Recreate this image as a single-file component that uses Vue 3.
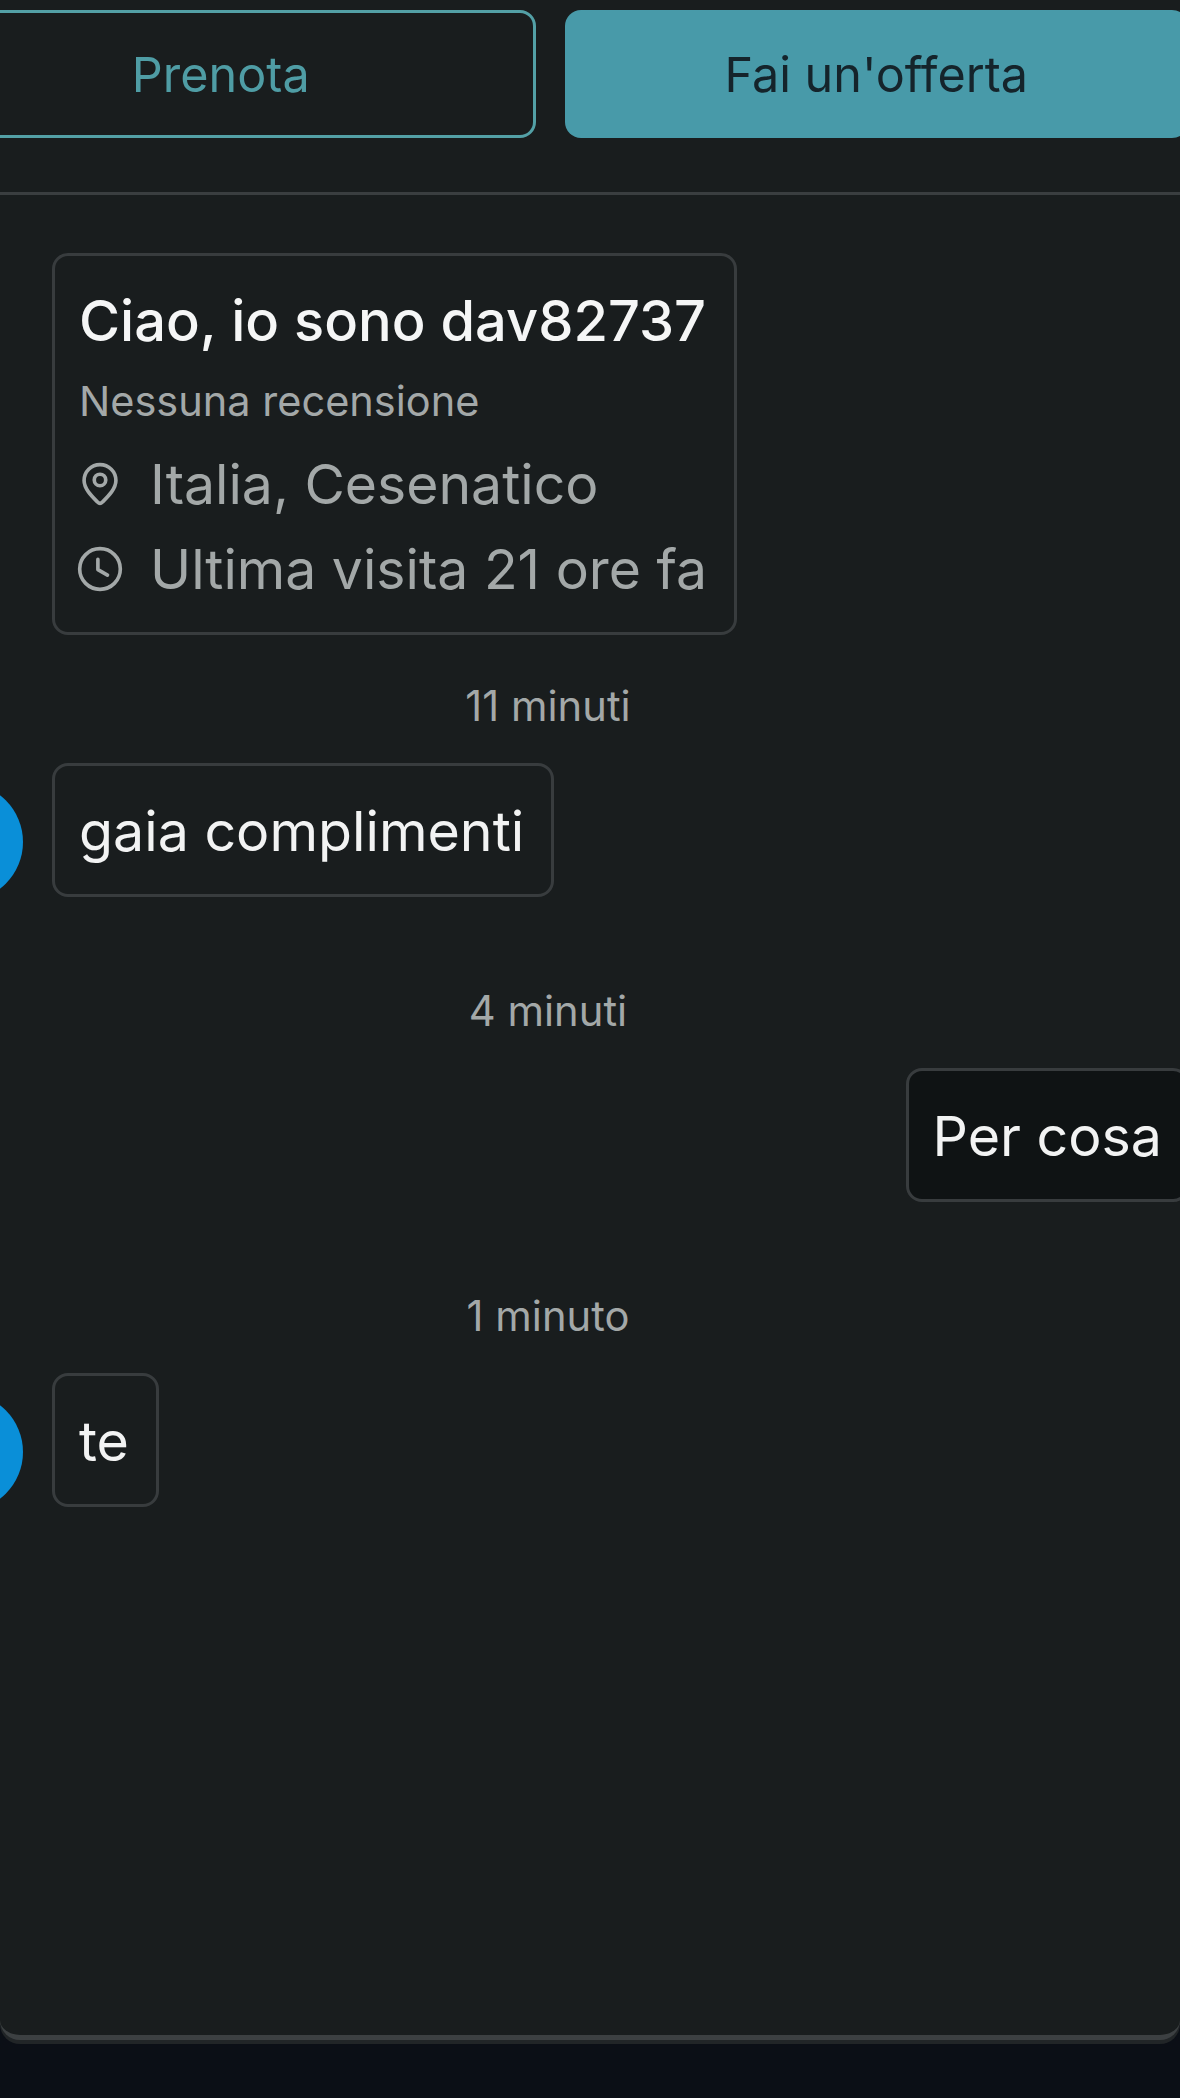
<template>
  <div class="page">
    <div class="panel">
      <div class="actions">
        <button class="btn outline">Prenota</button>
        <button class="btn filled">Fai un'offerta</button>
      </div>

      <div class="chat">
        <div class="intro">
          <div class="intro-title">Ciao, io sono dav82737</div>
          <div class="intro-sub">Nessuna recensione</div>
          <div class="intro-row">
            <svg class="icon" viewBox="0 0 24 24" fill="none" stroke="currentColor" stroke-width="1.9" stroke-linejoin="round">
              <path d="M12 22.1c-.5 0-.9-.3-1.3-.7C7.6 18.3 3.7 14.5 3.7 10.2 3.7 5.6 7.4 1.9 12 1.9s8.3 3.7 8.3 8.3c0 4.3-3.9 8.1-7 11.2-.4.4-.8.7-1.3.7z" />
              <circle cx="12" cy="9.9" r="3" />
            </svg>
            <span>Italia, Cesenatico</span>
          </div>
          <div class="intro-row">
            <svg class="icon" viewBox="0 0 24 24" fill="none" stroke="currentColor" stroke-width="1.9" stroke-linecap="round" stroke-linejoin="round">
              <circle cx="12" cy="12" r="10.6" />
              <path d="M10.9 7v5.3l5 2.9" />
            </svg>
            <span>Ultima visita 21 ore fa</span>
          </div>
        </div>

        <template v-for="msg in messages" :key="msg.time">
          <div class="time">{{ msg.time }}</div>
          <div class="row" :class="{ mine: msg.mine }">
            <div v-if="!msg.mine" class="avatar"></div>
            <div class="bubble">{{ msg.text }}</div>
          </div>
        </template>
      </div>
    </div>
  </div>
</template>

<script setup>
const messages = [
  { time: '11 minuti', text: 'gaia complimenti', mine: false },
  { time: '4 minuti', text: 'Per cosa', mine: true },
  { time: '1 minuto', text: 'te', mine: false }
]
</script>

<style>
html, body {
  margin: 0;
  background: #0b0f16;
  overflow: hidden;
}
</style>

<style scoped>
.page {
  width: 1180px;
  height: 2098px;
  overflow: hidden;
  background: #0b0f16;
  font-family: Inter, "Liberation Sans", sans-serif;
}

.panel {
  box-sizing: border-box;
  height: 2040px;
  background: #191d1e;
  border-bottom: 5px solid #3c4042;
  border-radius: 0 0 20px 20px;
  box-shadow: 0 4px 0 #212527;
}

.actions {
  display: flex;
  gap: 29px;
  width: 1282px;
  margin-left: -94px;
  padding: 10px 0 54px;
  border-bottom: 3px solid #3a3e40;
}

.btn {
  flex: 1;
  height: 128px;
  border-radius: 16px;
  font-family: inherit;
  font-size: 48.5px;
  font-weight: 400;
}

.outline {
  background: transparent;
  border: 3px solid #53a0a6;
  color: #4f9da5;
}

.filled {
  background: #489aa9;
  border: none;
  color: #15242b;
}

.chat {
  width: 1282px;
  margin-left: -93px;
}

.intro {
  box-sizing: border-box;
  width: 685px;
  height: 382px;
  margin: 58px 0 0 145px;
  padding: 35px 24px 0;
  background: #191d1e;
  border: 3px solid #383c3e;
  border-radius: 16px;
}

.intro-title {
  font-size: 56px;
  font-weight: 500;
  line-height: 60px;
  color: #f5f6f6;
  white-space: nowrap;
}

.intro-sub {
  margin: 25px 0 15px;
  font-size: 41.5px;
  line-height: 50px;
  color: #a3a8a8;
  white-space: nowrap;
}

.intro-row {
  display: flex;
  align-items: center;
  gap: 27px;
  height: 85px;
  font-size: 55.3px;
  color: #a3a8a8;
  white-space: nowrap;
}

.icon {
  flex: none;
  width: 46px;
  height: 46px;
  margin-left: -2px;
}

.time {
  margin-top: 49px;
  font-size: 41.7px;
  line-height: 44px;
  text-align: center;
  color: #a3a8a8;
}

.row {
  display: flex;
  align-items: center;
  gap: 29px;
  padding-left: 20px;
  margin-top: 35px;
  margin-bottom: 92px;
}

.row.mine {
  justify-content: flex-end;
  padding-left: 0;
}

.avatar {
  flex: none;
  align-self: flex-end;
  width: 118px;
  height: 118px;
  margin: 0 0 -4px -22px;
  border-radius: 50%;
  background: #0a8fd8;
}

.bubble {
  box-sizing: border-box;
  height: 134px;
  padding: 0 27px 0 24px;
  display: flex;
  align-items: center;
  font-size: 55.5px;
  color: #f2f3f3;
  background: #191d1e;
  border: 3px solid #383c3e;
  border-radius: 16px;
}

.mine .bubble {
  padding: 0 24px;
  background: #0f1314;
}
</style>
